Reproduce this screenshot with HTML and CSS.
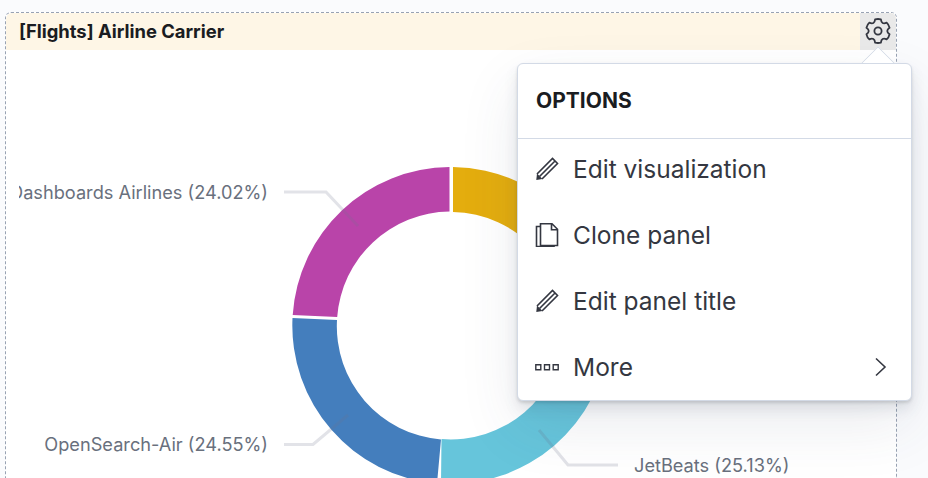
FILE: index.html
```html
<!DOCTYPE html>
<html lang="en">
<head>
    <meta charset="UTF-8">
    <title>[Flights] Airline Carrier</title>
    <link rel="stylesheet" href="styles.css">
</head>
<body>
    <div class="panel">
        <div class="panel-header">
            <h2 class="panel-title">[Flights] Airline Carrier</h2>
            <button class="gear-btn" type="button">
                <svg class="gear" width="26" height="26" viewBox="0 0 26 26">
                    <path d="M10.100 1.360Q13 .6 15.900 1.360Q16.500 6.940 21.630 4.660Q23.910 6.700 24.530 9.690Q20 13 24.530 16.310Q23.910 19.300 21.630 21.340Q16.500 19.060 15.900 24.640Q13 25.400 10.100 24.640Q9.500 19.060 4.370 21.340Q2.090 19.300 1.470 16.310Q6 13 1.470 9.690Q2.090 6.700 4.370 4.660Q9.500 6.940 10.100 1.360Z" />
                    <circle cx="13" cy="13" r="3.600" />
                </svg>
            </button>
        </div>

        <svg class="chart" viewBox="6 50 890 428" width="890" height="428">
            <defs>
                <clipPath id="label-clip"><rect x="19" y="50" width="860" height="428" /></clipPath>
            </defs>
            <!-- slices -->
            <path fill="#e4ad0e" d="M453 167A158.500 158.500 0 0 1 609 339L564 335A113.500 113.500 0 0 0 453 212Z" />
            <path fill="#66c5db" d="M609 339A158.500 158.500 0 0 1 441 483.500L441.500 439A113.500 113.500 0 0 0 564 335Z" />
            <path fill="#447ebd" d="M437 483.500A158.500 158.500 0 0 1 292.500 318L337 320A113.500 113.500 0 0 0 441 439.500Z" />
            <path fill="#b944a9" d="M292.700 315A158.500 158.500 0 0 1 449.500 167V211.500A114 114 0 0 0 337.200 317Z" />
            <!-- leader lines -->
            <polyline class="leader" points="284,192 326,192 358,226" />
            <polyline class="leader" points="284,444.500 313,444.500 348,415" />
            <polyline class="leader" points="539,430 568,465 618,465" />
            <!-- labels -->
            <g class="labels" clip-path="url(#label-clip)">
                <text x="268" y="198.500" text-anchor="end">Dashboards Airlines (24.02%)</text>
                <text x="268" y="450.500" text-anchor="end">OpenSearch-Air (24.55%)</text>
                <text x="634" y="471.500">JetBeats (25.13%)</text>
            </g>
        </svg>

        <div class="menu">
            <span class="menu-arrow"></span>
            <div class="menu-title">OPTIONS</div>
            <ul class="menu-list">
                <li class="menu-item">
                    <svg class="icon" width="24" height="24" viewBox="0 0 24 24">
                        <path class="line" d="M2 17 17.500 1.500 22.500 6.500 7 22M20 4 4.500 19.500" />
                        <path d="M2 16.500 7.500 22 1.300 23z" />
                    </svg>
                    <span>Edit visualization</span>
                </li>
                <li class="menu-item">
                    <svg class="icon" width="24" height="24" viewBox="0 0 24 24">
                        <path class="line" d="M5.500.8H17L22.500 6.300V22.500H5.500ZM16.500 1V6.800H22.500M5 3.500H1.500V23.500H19V22.800" />
                    </svg>
                    <span>Clone panel</span>
                </li>
                <li class="menu-item">
                    <svg class="icon" width="24" height="24" viewBox="0 0 24 24">
                        <path class="line" d="M2 17 17.500 1.500 22.500 6.500 7 22M20 4 4.500 19.500" />
                        <path d="M2 16.500 7.500 22 1.300 23z" />
                    </svg>
                    <span>Edit panel title</span>
                </li>
                <li class="menu-item">
                    <svg class="icon" width="24" height="24" viewBox="0 0 24 24">
                        <path class="line thin" d="M.800 9.800h5v5h-5zM9.500 9.800h5v5h-5zM18.200 9.800h5v5h-5z" />
                    </svg>
                    <span>More</span>
                    <svg class="chevron" width="14" height="20" viewBox="0 0 14 20">
                        <path class="line" d="M2 1.500 11 10 2 18.500" />
                    </svg>
                </li>
            </ul>
        </div>
    </div>
</body>
</html>
```

FILE: styles.css
```css
* {
    box-sizing: border-box;
    font-family: Inter, "Liberation Sans", sans-serif;
}
html, body {
    height: 100%;
}
body {
    margin: 0;
    padding: 12px 31px 0 5px;
    background-color: #fafbfd;
    overflow: hidden;
}
.panel {
    position: relative;
    height: 466px;
    background-color: #fff;
    border: 1px dashed #98a2b3;
    border-bottom: 0;
    border-radius: 6px 6px 0 0;
}
.panel-header {
    display: flex;
    align-items: center;
    height: 37px;
    padding-left: 13px;
    background-color: #fef6e6;
    border-radius: 6px 6px 0 0;
}
.panel-title {
    flex: 1;
    margin: 0;
    padding-bottom: 2px;
    font-size: 18.400px;
    font-weight: 700;
    color: #1a1c21;
}
.gear-btn {
    display: flex;
    align-items: center;
    justify-content: center;
    width: 36px;
    height: 100%;
    padding: 0 0 2px;
    border: 0;
    border-radius: 0 6px 0 0;
    background-color: #e9e9e9;
}
.gear path, .gear circle {
    fill: none;
    stroke: #343741;
    stroke-width: 1.800;
    stroke-linejoin: round;
}
.chart {
    display: block;
}
.leader {
    fill: none;
    stroke: #6e738c;
    stroke-width: 3;
    stroke-opacity: .2;
}
.labels text {
    font-size: 18.200px;
    fill: #69707d;
}
.menu {
    position: absolute;
    left: 511px;
    top: 50px;
    width: 395px;
    height: 338px;
    background-color: #fff;
    border: 1px solid #d3dae6;
    border-radius: 6px;
    box-shadow: 0 2px 3px rgba(0, 0, 0, .12), 0 8px 14px rgba(60, 70, 100, .12), 0 24px 60px rgba(60, 70, 100, .1);
}
.menu-arrow {
    position: absolute;
    top: -13px;
    left: 348px;
    width: 24px;
    height: 24px;
    background-color: #fff;
    border-left: 1px solid #d3dae6;
    border-top: 1px solid #d3dae6;
    transform: rotate(45deg);
    clip-path: polygon(0 0, 100% 0, 0 100%);
}
.menu-title {
    display: flex;
    align-items: center;
    height: 75px;
    padding: 0 18px 1px;
    font-size: 21px;
    font-weight: 700;
    color: #1a1c21;
    border-bottom: 1px solid #d3dae6;
}
.menu-list {
    margin: -3px 0 0;
    padding: 0;
    list-style: none;
}
.menu-item {
    display: flex;
    align-items: center;
    gap: 14px;
    height: 66px;
    padding: 0 23px 0 17px;
    font-size: 24.500px;
    color: #343741;
}
.menu-item span {
    flex: 1;
}
.icon path {
    fill: #343741;
}
.icon .line, .chevron .line {
    fill: none;
    stroke: #343741;
    stroke-width: 1.600;
}
.icon .thin {
    stroke-width: 1.400;
}
```
